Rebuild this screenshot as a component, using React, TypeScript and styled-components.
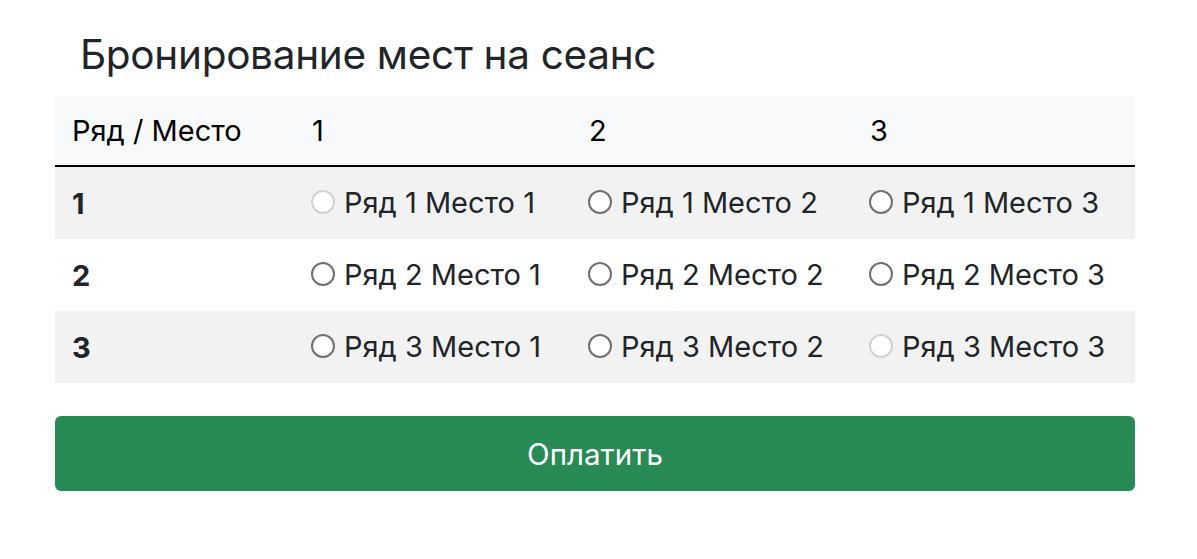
import React, { useState } from "react";
import styled, { createGlobalStyle } from "styled-components";

const GlobalStyle = createGlobalStyle`
  body {
    margin: 0;
    background: #ffffff;
    font-family: Inter, "Noto Sans", "Liberation Sans", sans-serif;
    color: #212529;
  }
`;

const Page = styled.div`
  width: 1080px;
  padding: 0 0 0 55px;
`;

const Title = styled.h2`
  margin: 0;
  padding: 31px 0 0 25px;
  height: 96px;
  box-sizing: border-box;
  font-size: 40.5px;
  font-weight: 400;
  line-height: 48px;
  letter-spacing: -0.3px;
  color: #212529;
`;

const Table = styled.table`
  width: 100%;
  border-collapse: collapse;
  font-size: 29px;
  margin-bottom: 33px;
`;

const HeadRow = styled.tr`
  background: #f8f9fa;
  border-bottom: 2px solid #000;
`;

const HeadCell = styled.th<{ $w: number }>`
  width: ${(p) => p.$w}px;
  height: 70px;
  padding: 0 17px;
  box-sizing: border-box;
  text-align: left;
  font-weight: 400;
  color: #000;
`;

const BodyRow = styled.tr<{ $striped: boolean }>`
  background: ${(p) => (p.$striped ? "#f2f2f2" : "#ffffff")};
`;

const RowLabel = styled.td`
  height: 72px;
  padding: 0 17px;
  font-weight: 700;
`;

const SeatCell = styled.td`
  height: 72px;
  padding: 0 16px;
`;

const SeatLabel = styled.label`
  display: inline-flex;
  align-items: center;
  gap: 9px;
  white-space: nowrap;
  cursor: pointer;
`;

const Radio = styled.input`
  appearance: none;
  margin: 0;
  width: 24px;
  height: 24px;
  border-radius: 50%;
  border: 2px solid #707070;
  background: #fff;
  box-sizing: border-box;
  flex-shrink: 0;

  &:checked {
    border: 7px solid #0d6efd;
  }

  &:disabled {
    border: 2px solid #d2d2d2;
  }
`;

const PayButton = styled.button`
  display: block;
  width: 100%;
  height: 75px;
  border: none;
  border-radius: 6px;
  background: #288a55;
  color: #ffffff;
  font-family: inherit;
  font-size: 29.5px;
  cursor: pointer;
`;

const seats = [1, 2, 3];
const taken = ["1-1", "3-3"];

const App = () => {
  const [selected, setSelected] = useState<string | null>(null);

  return (
    <Page>
      <GlobalStyle />
      <Title>Бронирование мест на сеанс</Title>
      <Table>
        <thead>
          <HeadRow>
            <HeadCell $w={240}>Ряд / Место</HeadCell>
            <HeadCell $w={277}>1</HeadCell>
            <HeadCell $w={281}>2</HeadCell>
            <HeadCell $w={282}>3</HeadCell>
          </HeadRow>
        </thead>
        <tbody>
          {seats.map((row) => (
            <BodyRow key={row} $striped={row % 2 === 1}>
              <RowLabel>{row}</RowLabel>
              {seats.map((seat) => {
                const id = `${row}-${seat}`;
                return (
                  <SeatCell key={seat}>
                    <SeatLabel>
                      <Radio
                        type="radio"
                        name="seat"
                        disabled={taken.includes(id)}
                        checked={selected === id}
                        onChange={() => setSelected(id)}
                      />
                      Ряд {row} Место {seat}
                    </SeatLabel>
                  </SeatCell>
                );
              })}
            </BodyRow>
          ))}
        </tbody>
      </Table>
      <PayButton>Оплатить</PayButton>
    </Page>
  );
};

export default App;
